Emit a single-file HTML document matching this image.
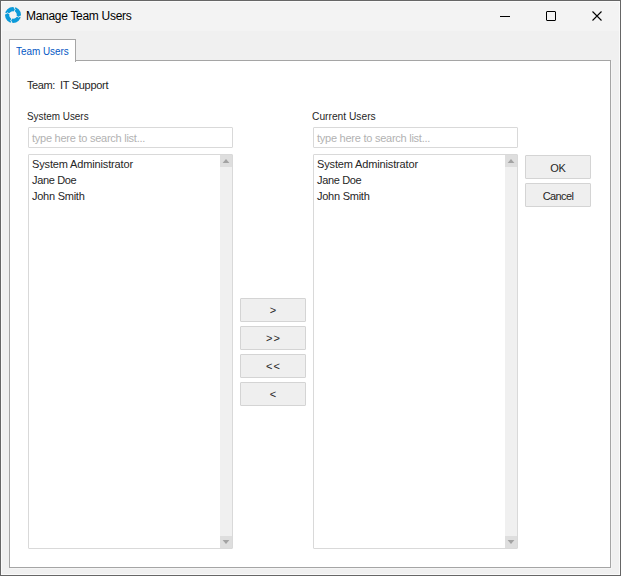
<!DOCTYPE html>
<html><head><meta charset="utf-8">
<style>
html,body{margin:0;padding:0;}
body{width:621px;height:576px;position:relative;overflow:hidden;background:#f0f0f0;font-family:"Liberation Sans",sans-serif;color:#262626;}
.a{position:absolute;}
.t{position:absolute;white-space:pre;font-size:11px;line-height:12px;}
#win{left:0;top:0;width:619px;height:574px;border:1px solid #666;}
#titlebar{left:1px;top:1px;width:619px;height:30px;background:#f3f3f3;}
.box{position:absolute;background:#fff;border:1px solid #d9d9d9;box-sizing:border-box;border-radius:1px;}
.btn{position:absolute;background:#efefef;border:1px solid #d4d4d4;box-sizing:border-box;border-radius:1px;}
.sb{position:absolute;background:#f0f0f0;}
.sbb{position:absolute;background:#dedede;}
</style></head>
<body>
<div class="a" id="win"></div>
<div class="a" style="left:1px;top:1px;width:619px;height:1px;background:#fafafa"></div>
<div class="a" style="left:1px;top:1px;width:1px;height:574px;background:#fafafa"></div>
<div class="a" style="left:619px;top:1px;width:1px;height:574px;background:#fafafa"></div>
<div class="a" style="left:1px;top:574px;width:619px;height:1px;background:#fafafa"></div>
<div class="a" style="left:2px;top:2px;width:617px;height:29px;background:#f3f3f3"></div>

<!-- title icon -->
<svg class="a" style="left:5px;top:7px" width="16" height="16" viewBox="0 0 16 16">
  <circle cx="8" cy="8" r="5.9" fill="none" stroke="#0b9ad9" stroke-width="4.2"/>
  <g stroke="#f3f3f3" stroke-width="1" fill="none">
    <path d="M9.6 -1 L9.6 1.8 L10.2 2.6 L9.6 3.4 L9.6 8"/>
    <path d="M17 9.6 L14.2 9.6 L13.4 10.2 L12.6 9.6 L8 9.6"/>
    <path d="M6.4 17 L6.4 14.2 L5.8 13.4 L6.4 12.6 L6.4 8"/>
    <path d="M-1 6.4 L1.8 6.4 L2.6 5.8 L3.4 6.4 L8 6.4"/>
  </g>
  <g fill="#f3f3f3">
    <path d="M9.2 -0.5 L9.2 1.2 Q9 0.3 8.1 0 Z"/>
    <path d="M16.5 9.2 L14.8 9.2 Q15.7 9 16 8.1 Z"/>
    <path d="M6.8 16.5 L6.8 14.8 Q7 15.7 7.9 16 Z"/>
    <path d="M-0.5 6.8 L1.2 6.8 Q0.3 7 0 7.9 Z"/>
  </g>
</svg>
<div class="t" style="left:26px;top:10px;font-size:12px;letter-spacing:-0.3px;color:#000">Manage Team Users</div>

<!-- caption buttons -->
<div class="a" style="left:500px;top:16px;width:10px;height:1px;background:#000"></div>
<div class="a" style="left:546px;top:11px;width:8px;height:8px;border:1px solid #000;border-radius:1px"></div>
<svg class="a" style="left:591px;top:10px" width="12" height="12" viewBox="0 0 12 12">
  <path d="M1.5 1.5 L10.5 10.5 M10.5 1.5 L1.5 10.5" stroke="#000" stroke-width="1.1"/>
</svg>

<!-- tab -->
<div class="a" style="left:9px;top:60px;width:600px;height:506px;background:#fff;border:1px solid #a5a5a5"></div>
<div class="a" style="left:10px;top:568px;width:601px;height:1px;background:#f5f5f5"></div>
<div class="a" style="left:611px;top:61px;width:1px;height:508px;background:#f5f5f5"></div>
<div class="a" style="left:9px;top:39px;width:65px;height:22px;background:#fff;border:1px solid #a5a5a5;border-bottom:none"></div>
<div class="t" style="left:16px;top:45px;color:#0558c4;transform:scaleX(0.9);transform-origin:0 0">Team Users</div>

<div class="t" style="left:27px;top:79px;letter-spacing:-0.4px">Team:</div>
<div class="t" style="left:60px;top:79px;letter-spacing:-0.3px">IT Support</div>

<div class="t" style="left:27px;top:110px;transform:scaleX(0.9);transform-origin:0 0">System Users</div>
<div class="t" style="left:312px;top:110px;transform:scaleX(0.93);transform-origin:0 0">Current Users</div>

<!-- left search -->
<div class="box" style="left:28px;top:127px;width:205px;height:21px"></div>
<div class="t" style="left:32px;top:132px;color:#b2b2b2;letter-spacing:-0.25px">type here to search list...</div>
<!-- left list -->
<div class="box" style="left:28px;top:154px;width:205px;height:395px"></div>
<div class="sb" style="left:220px;top:155px;width:12px;height:393px"></div>
<div class="sbb" style="left:220px;top:155px;width:12px;height:12px"></div>
<div class="sbb" style="left:220px;top:536px;width:12px;height:12px"></div>
<div class="t" style="left:32px;top:158px;letter-spacing:-0.15px">System Administrator</div>
<div class="t" style="left:32px;top:174px;letter-spacing:-0.35px">Jane Doe</div>
<div class="t" style="left:32px;top:190px;letter-spacing:-0.25px">John Smith</div>

<!-- right search -->
<div class="box" style="left:313px;top:127px;width:205px;height:21px"></div>
<div class="t" style="left:317px;top:132px;color:#b2b2b2;letter-spacing:-0.25px">type here to search list...</div>
<!-- right list -->
<div class="box" style="left:313px;top:154px;width:205px;height:395px"></div>
<div class="sb" style="left:505px;top:155px;width:12px;height:393px"></div>
<div class="sbb" style="left:505px;top:155px;width:12px;height:12px"></div>
<div class="sbb" style="left:505px;top:536px;width:12px;height:12px"></div>
<div class="t" style="left:317px;top:158px;letter-spacing:-0.15px">System Administrator</div>
<div class="t" style="left:317px;top:174px;letter-spacing:-0.35px">Jane Doe</div>
<div class="t" style="left:317px;top:190px;letter-spacing:-0.25px">John Smith</div>

<svg class="a" style="left:220px;top:155px" width="12" height="12"><path d="M2.6 8.1 L6 4 L9.4 8.1 Z" fill="#a3a3a3"/></svg>
<svg class="a" style="left:220px;top:536px" width="12" height="12"><path d="M2.6 3.9 L6 8 L9.4 3.9 Z" fill="#a3a3a3"/></svg>
<svg class="a" style="left:505px;top:155px" width="12" height="12"><path d="M2.6 8.1 L6 4 L9.4 8.1 Z" fill="#a3a3a3"/></svg>
<svg class="a" style="left:505px;top:536px" width="12" height="12"><path d="M2.6 3.9 L6 8 L9.4 3.9 Z" fill="#a3a3a3"/></svg>
<!-- OK / Cancel -->
<div class="btn" style="left:525px;top:155px;width:66px;height:24px"></div>
<div class="t" style="left:525px;top:162px;width:66px;text-align:center;letter-spacing:-0.3px">OK</div>
<div class="btn" style="left:525px;top:183px;width:66px;height:24px"></div>
<div class="t" style="left:525px;top:190px;width:66px;text-align:center;letter-spacing:-0.6px">Cancel</div>

<!-- move buttons -->
<div class="btn" style="left:240px;top:298px;width:66px;height:24px"></div>
<div class="t" style="left:240px;top:304px;width:66px;text-align:center">&gt;</div>
<div class="btn" style="left:240px;top:326px;width:66px;height:24px"></div>
<div class="t" style="left:240px;top:332px;width:66px;text-align:center;letter-spacing:1px;text-indent:1px">&gt;&gt;</div>
<div class="btn" style="left:240px;top:354px;width:66px;height:24px"></div>
<div class="t" style="left:240px;top:360px;width:66px;text-align:center;letter-spacing:1px;text-indent:1px">&lt;&lt;</div>
<div class="btn" style="left:240px;top:382px;width:66px;height:24px"></div>
<div class="t" style="left:240px;top:388px;width:66px;text-align:center">&lt;</div>
</body></html>
